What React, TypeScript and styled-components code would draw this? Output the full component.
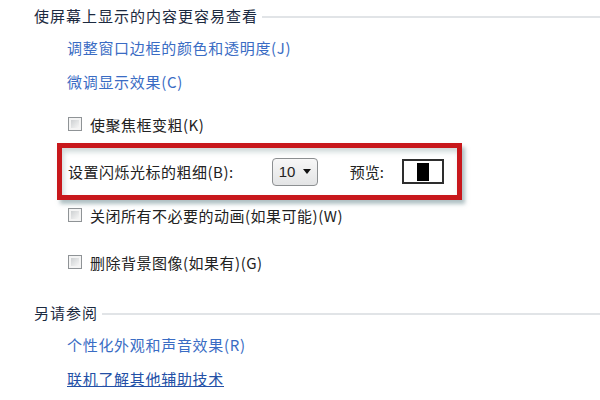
import styled, { createGlobalStyle } from "styled-components";

const GlobalStyle = createGlobalStyle`
  html, body {
    margin: 0;
    background: #ffffff;
  }
  body {
    font-family: "Noto Sans CJK SC", "Noto Sans", "Liberation Sans", sans-serif;
  }
`;

function Checkbox({ label }: { label: string }) {
  return (
    <CheckRow>
      <Box />
      <CheckText>{label}</CheckText>
    </CheckRow>
  );
}

function App() {
  return (
    <>
      <GlobalStyle />
      <Page>
        <SectionHeader>
          <HeaderText>使屏幕上显示的内容更容易查看</HeaderText>
          <Rule />
        </SectionHeader>
        <LinkRow>
          <TaskLink>调整窗口边框的颜色和透明度(J)</TaskLink>
        </LinkRow>
        <LinkRow>
          <TaskLink>微调显示效果(C)</TaskLink>
        </LinkRow>

        <Options>
          <Checkbox label="使聚焦框变粗(K)" />
          <Highlight>
            <CursorLabel>设置闪烁光标的粗细(B):</CursorLabel>
            <Select>
              <span>10</span>
              <Arrow />
            </Select>
            <PreviewLabel>预览:</PreviewLabel>
            <Preview>
              <Caret />
            </Preview>
          </Highlight>
          <Checkbox label="关闭所有不必要的动画(如果可能)(W)" />
          <Spacer />
          <Checkbox label="删除背景图像(如果有)(G)" />
        </Options>

        <SectionHeader $top={21}>
          <HeaderText>另请参阅</HeaderText>
          <Rule />
        </SectionHeader>
        <LinkRow>
          <TaskLink>个性化外观和声音效果(R)</TaskLink>
        </LinkRow>
        <LinkRow>
          <TaskLink $underline>联机了解其他辅助技术</TaskLink>
        </LinkRow>
      </Page>
    </>
  );
}

const Page = styled.div`
  display: flex;
  flex-direction: column;
  width: 600px;
  height: 400px;
  padding-left: 34px;
  box-sizing: border-box;
  overflow: hidden;
`;

const SectionHeader = styled.div<{ $top?: number }>`
  display: flex;
  align-items: center;
  gap: 4px;
  height: 30px;
  margin-top: ${(p) => p.$top ?? 0}px;
`;

const HeaderText = styled.span`
  font-size: 15px;
  letter-spacing: 1px;
  color: #1c2a40;
  white-space: nowrap;
`;

const Rule = styled.div`
  flex: 1;
  height: 2px;
  margin-top: 3px;
  background: #e1e4e7;
`;

const LinkRow = styled.div`
  display: flex;
  align-items: center;
  height: 34px;
  padding-left: 33px;
`;

const TaskLink = styled.a<{ $underline?: boolean }>`
  font-size: 15px;
  letter-spacing: 0.7px;
  color: ${(p) => (p.$underline ? "#2350a6" : "#3a6cc4")};
  text-decoration: ${(p) => (p.$underline ? "underline" : "none")};
  cursor: pointer;
  white-space: nowrap;
`;

const Options = styled.div`
  display: flex;
  flex-direction: column;
  padding-top: 12px;
`;

const CheckRow = styled.div`
  display: flex;
  align-items: center;
  gap: 8px;
  height: 28px;
  padding-left: 34px;
`;

const Spacer = styled.div`
  height: 19px;
`;

const Box = styled.span`
  position: relative;
  width: 14px;
  height: 14px;
  box-sizing: border-box;
  border: 1px solid #8f9396;
  background: #f4f4f4;
  &::after {
    content: "";
    position: absolute;
    inset: 2px;
    background: linear-gradient(135deg, #cdd0d2, #f6f6f6);
  }
`;

const CheckText = styled.span`
  font-size: 15px;
  letter-spacing: 0.5px;
  color: #222;
  white-space: nowrap;
`;

const Highlight = styled.div`
  display: flex;
  align-items: center;
  width: 405px;
  height: 57px;
  box-sizing: border-box;
  margin: 5px 0 1px 23px;
  padding: 0 0 0 6px;
  border: 5px solid #c8181c;
  background: #ffffff;
  box-shadow: 3px 4px 4px rgba(110, 140, 145, 0.55),
    inset 2px 4px 5px rgba(120, 150, 150, 0.35);
`;

const CursorLabel = styled.span`
  font-size: 15px;
  letter-spacing: 0.5px;
  color: #222;
  white-space: nowrap;
`;

const Select = styled.div`
  display: flex;
  align-items: center;
  justify-content: space-between;
  width: 46px;
  height: 28px;
  box-sizing: border-box;
  margin-left: 38px;
  padding: 0 6px 0 6px;
  border: 1px solid #8c8f91;
  border-radius: 4px;
  background: linear-gradient(#f7f7f7, #e3e4e5);
  font-family: "Liberation Sans", sans-serif;
  font-size: 15px;
  color: #222;
`;

const Arrow = styled.span`
  width: 0;
  height: 0;
  border-left: 4px solid transparent;
  border-right: 4px solid transparent;
  border-top: 5px solid #111;
`;

const PreviewLabel = styled.span`
  margin-left: 32px;
  font-size: 15px;
  color: #222;
`;

const Preview = styled.div`
  display: flex;
  align-items: center;
  justify-content: center;
  width: 42px;
  height: 25px;
  box-sizing: border-box;
  margin-left: 18px;
  border: 2px solid #2e2e2e;
  background: #ffffff;
`;

const Caret = styled.div`
  width: 12px;
  height: 18px;
  background: #000;
`;

export default App;
